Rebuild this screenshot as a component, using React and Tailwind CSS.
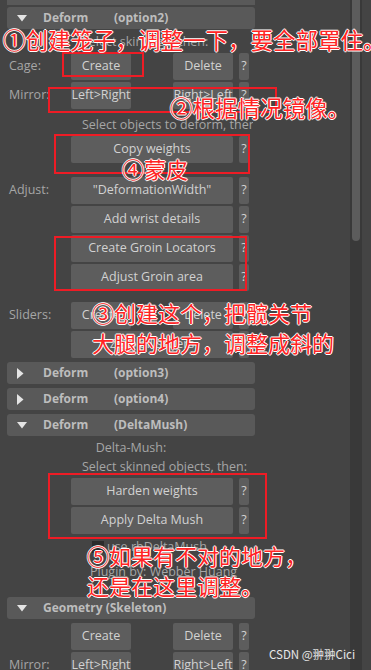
const btn =
  "flex items-center justify-center overflow-hidden whitespace-nowrap rounded-[2px] bg-[#5d5d5d] text-[#d2d2d2]";

function Q() {
  return <div className={`${btn} ml-[6px] w-[10px]`}>?</div>;
}

function Label({ children }) {
  return <div className="flex w-[71px] items-center pl-[9px] text-[#a6a6a6]">{children}</div>;
}

function PairRow({ label, a, b, className = "" }) {
  return (
    <div className={`flex h-[27px] ${className}`}>
      <Label>{label}</Label>
      <div className={`${btn} w-[60px]`}>{a}</div>
      <div className="w-[42px]" />
      <div className={`${btn} w-[60px]`}>{b}</div>
      <Q />
    </div>
  );
}

function WideRow({ label, text, className = "" }) {
  return (
    <div className={`flex h-[27px] ${className}`}>
      <Label>{label}</Label>
      <div className={`${btn} w-[162px]`}>{text}</div>
      <Q />
    </div>
  );
}

function Header({ open, title, sub, className = "" }) {
  return (
    <div
      className={`ml-[7px] flex h-[22px] w-[248px] items-center rounded-[3px] bg-[#595959] text-[12px] font-bold text-[#bdbdbd] ${className}`}
    >
      <div className="flex w-[36px] pl-[10px]">
        {open ? (
          <svg width="10" height="7" viewBox="0 0 10 7">
            <path d="M0 0 H10 L5 6.5 Z" fill="#e4e4e4" />
          </svg>
        ) : (
          <svg width="7" height="11" viewBox="0 0 7 11">
            <path d="M0 0 L6.5 5.5 L0 11 Z" fill="#e4e4e4" />
          </svg>
        )}
      </div>
      {sub ? (
        <>
          <span className="w-[71px]">{title}</span>
          <span>{sub}</span>
        </>
      ) : (
        <span>{title}</span>
      )}
    </div>
  );
}

function Note({ children, className = "" }) {
  return (
    <div
      className={`absolute whitespace-nowrap font-['Noto_Sans_CJK_SC',sans-serif] leading-none text-[#ff2424] [text-shadow:1px_0_#fff,-1px_0_#fff,0_1px_#fff,0_-1px_#fff] ${className}`}
    >
      {children}
    </div>
  );
}

function Box({ className = "" }) {
  return <div className={`absolute border-2 border-[#ee1c25] ${className}`} />;
}

export default function App() {
  return (
    <div className="relative flex h-[670px] w-[371px] overflow-hidden bg-[#444444] font-['Open_Sans','Noto_Sans_CJK_SC',sans-serif] text-[12.5px]">
      <div className="flex w-[350px] flex-col *:shrink-0">
        <div className="ml-[7px] h-[5px] w-[248px] bg-[#595959]" />
        <Header open title="Deform" sub="(option2)" className="mt-[2px]" />
        <div className="h-[24px] pl-[82px] pt-[4px] text-[#a6a6a6]">Select skinCage, then:</div>

        <PairRow label="Cage:" a="Create" b="Delete" />
        <PairRow label="Mirror:" a="Left>Right" b="Right>Left" className="mt-[2px]" />
        <div className="h-[27px] w-[253px] overflow-hidden whitespace-nowrap pl-[82px] pt-[9px] leading-[14px] text-[#a6a6a6]">
          Select objects to deform, then:
        </div>
        <WideRow text="Copy weights" />

        <WideRow label="Adjust:" text={'"DeformationWidth"'} className="mt-[14px]" />
        <WideRow text="Add wrist details" className="mt-[2px]" />
        <WideRow text="Create Groin Locators" className="mt-[2px]" />
        <WideRow text="Adjust Groin area" className="mt-[2px]" />

        <PairRow label="Sliders:" a="Create" b="Delete" className="mt-[11px]" />
        <WideRow text="Zero all sliders" className="mt-[2px]" />

        <Header title="Deform" sub="(option3)" className="mt-[4px]" />
        <Header title="Deform" sub="(option4)" className="mt-[4px]" />
        <Header open title="Deform" sub="(DeltaMush)" className="mt-[4px]" />

        <div className="ml-[7px] mt-[4px] h-[16px] w-[248px] text-center leading-[16px] text-[#a6a6a6]">Delta-Mush:</div>
        <div className="mt-[3px] h-[16px] pl-[82px] leading-[16px] text-[#a6a6a6]">Select skinned objects, then:</div>
        <WideRow text="Harden weights" className="mt-[3px]" />
        <WideRow text="Apply Delta Mush" className="mt-[2px]" />
        <div className="mt-[6px] flex h-[14px] items-center pl-[92px] text-[#a6a6a6]">
          <div className="h-[12px] w-[12px] bg-[#2b2b2b]" />
          <span className="ml-[3px]">use rbDeltaMush</span>
        </div>
        <div className="mt-[11px] h-[14px] pl-[90px] leading-[14px] text-[#a6a6a6]">Plugin by: Webber Huang</div>

        <Header open title="Geometry (Skeleton)" className="mt-[18px]" />
        <PairRow a="Create" b="Delete" className="mt-[4px]" />
        <PairRow label="Mirror:" a="Left>Right" b="Right>Left" className="mt-[2px]" />
      </div>

      <div className="flex w-[12px] flex-col bg-[#393939] px-[2px]">
        <div className="h-[241px] rounded-b-full bg-[#5c5c5c]" />
      </div>

      <Box className="left-[62px] top-[52px] h-[25px] w-[82px]" />
      <Box className="left-[48px] top-[87px] h-[26px] w-[229px]" />
      <Box className="left-[54px] top-[134px] h-[40px] w-[196px]" />
      <Box className="left-[54px] top-[236px] h-[55px] w-[193px]" />
      <Box className="left-[48px] top-[473px] h-[66px] w-[219px]" />

      <Note className="left-[3px] top-[28px] text-[22.5px]">①创建笼子，调整一下，要全部罩住。</Note>
      <Note className="left-[170px] top-[96px] text-[22.5px]">②根据情况镜像。</Note>
      <Note className="left-[122px] top-[157px] text-[22px]">④蒙皮</Note>
      <Note className="left-[92px] top-[301px] text-[22px]">③创建这个，把髋关节</Note>
      <Note className="left-[92px] top-[331px] text-[22px]">大腿的地方，调整成斜的</Note>
      <Note className="left-[87px] top-[544px] text-[22px]">⑤如果有不对的地方，</Note>
      <Note className="left-[87px] top-[574px] text-[22px]">还是在这里调整。</Note>

      <div className="absolute left-[269px] top-[647px] whitespace-nowrap font-['Noto_Sans_CJK_SC',sans-serif] text-[11.5px] leading-[14px] text-[#e8e8e8]">
        CSDN @翀翀Cici
      </div>
    </div>
  );
}
